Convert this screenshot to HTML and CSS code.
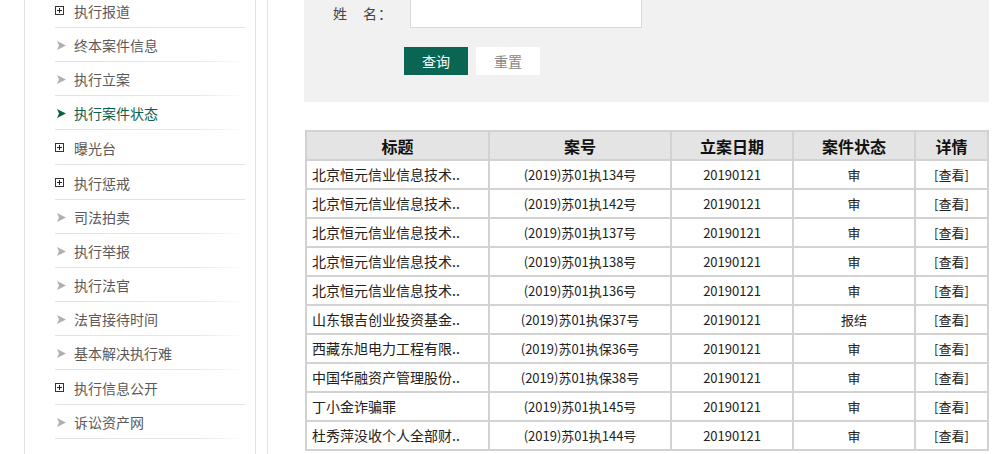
FILE: index.html
```html
<!DOCTYPE html>
<html lang="zh-CN">
<head>
    <meta charset="UTF-8">
    <title>执行案件状态</title>
    <link rel="stylesheet" href="styles.css">
</head>
<body>
    <div class="page">
        <aside class="side">
            <ul class="menu">
                <li class="menu-item has-sub"><span class="ico-plus"></span>执行报道</li>
                <li class="menu-item"><svg class="ico-arrow" viewBox="0 0 9 9"><polygon points="0,0 9,4.5 0,9 2,4.5"/></svg>终本案件信息</li>
                <li class="menu-item"><svg class="ico-arrow" viewBox="0 0 9 9"><polygon points="0,0 9,4.5 0,9 2,4.5"/></svg>执行立案</li>
                <li class="menu-item active"><svg class="ico-arrow" viewBox="0 0 9 9"><polygon points="0,0 9,4.5 0,9 2,4.5"/></svg>执行案件状态</li>
                <li class="menu-item has-sub"><span class="ico-plus"></span>曝光台</li>
                <li class="menu-item has-sub"><span class="ico-plus"></span>执行惩戒</li>
                <li class="menu-item"><svg class="ico-arrow" viewBox="0 0 9 9"><polygon points="0,0 9,4.5 0,9 2,4.5"/></svg>司法拍卖</li>
                <li class="menu-item"><svg class="ico-arrow" viewBox="0 0 9 9"><polygon points="0,0 9,4.5 0,9 2,4.5"/></svg>执行举报</li>
                <li class="menu-item"><svg class="ico-arrow" viewBox="0 0 9 9"><polygon points="0,0 9,4.5 0,9 2,4.5"/></svg>执行法官</li>
                <li class="menu-item"><svg class="ico-arrow" viewBox="0 0 9 9"><polygon points="0,0 9,4.5 0,9 2,4.5"/></svg>法官接待时间</li>
                <li class="menu-item"><svg class="ico-arrow" viewBox="0 0 9 9"><polygon points="0,0 9,4.5 0,9 2,4.5"/></svg>基本解决执行难</li>
                <li class="menu-item has-sub"><span class="ico-plus"></span>执行信息公开</li>
                <li class="menu-item"><svg class="ico-arrow" viewBox="0 0 9 9"><polygon points="0,0 9,4.5 0,9 2,4.5"/></svg>诉讼资产网</li>
            </ul>
        </aside>

        <main class="main">
            <form class="search">
                <div class="search-row">
                    <label class="search-label">姓　名：</label>
                    <input class="search-input" type="text">
                </div>
                <div class="search-btns">
                    <button type="button" class="btn btn-query">查询</button>
                    <button type="reset" class="btn btn-reset">重置</button>
                </div>
            </form>

            <table class="list">
                <colgroup>
                    <col class="col-title">
                    <col class="col-no">
                    <col class="col-date">
                    <col class="col-state">
                    <col class="col-more">
                </colgroup>
                <thead>
                    <tr><th>标题</th><th>案号</th><th>立案日期</th><th>案件状态</th><th>详情</th></tr>
                </thead>
                <tbody>
                    <tr><td class="t">北京恒元信业信息技术..</td><td>(2019)苏01执134号</td><td>20190121</td><td>审</td><td>[查看]</td></tr>
                    <tr><td class="t">北京恒元信业信息技术..</td><td>(2019)苏01执142号</td><td>20190121</td><td>审</td><td>[查看]</td></tr>
                    <tr><td class="t">北京恒元信业信息技术..</td><td>(2019)苏01执137号</td><td>20190121</td><td>审</td><td>[查看]</td></tr>
                    <tr><td class="t">北京恒元信业信息技术..</td><td>(2019)苏01执138号</td><td>20190121</td><td>审</td><td>[查看]</td></tr>
                    <tr><td class="t">北京恒元信业信息技术..</td><td>(2019)苏01执136号</td><td>20190121</td><td>审</td><td>[查看]</td></tr>
                    <tr><td class="t">山东银吉创业投资基金..</td><td>(2019)苏01执保37号</td><td>20190121</td><td>报结</td><td>[查看]</td></tr>
                    <tr><td class="t">西藏东旭电力工程有限..</td><td>(2019)苏01执保36号</td><td>20190121</td><td>审</td><td>[查看]</td></tr>
                    <tr><td class="t">中国华融资产管理股份..</td><td>(2019)苏01执保38号</td><td>20190121</td><td>审</td><td>[查看]</td></tr>
                    <tr><td class="t">丁小金诈骗罪</td><td>(2019)苏01执145号</td><td>20190121</td><td>审</td><td>[查看]</td></tr>
                    <tr><td class="t">杜秀萍没收个人全部财..</td><td>(2019)苏01执144号</td><td>20190121</td><td>审</td><td>[查看]</td></tr>
                </tbody>
            </table>
        </main>
    </div>
</body>
</html>
```

FILE: styles.css
```css
:root {
    --green: #0a6552;
    --line: #e2e2e2;
    --panel: #f1f1f1;
    --grid: #d2d2d2;
}

* {
    margin: 0;
    padding: 0;
    box-sizing: border-box;
}

html, body {
    height: 100%;
    overflow: hidden;
}

body {
    font-family: "Noto Sans CJK SC", "Liberation Sans", sans-serif;
    font-size: 14px;
    color: #333;
    background: #fff;
}

.page {
    display: flex;
    align-items: stretch;
    min-height: 100%;
    padding-left: 24px;
}

/* 左侧菜单 */
.side {
    width: 232px;
    flex: none;
    border-left: 1px solid var(--line);
    border-right: 1px solid var(--line);
    padding: 0 10px 0 30px;
}

.menu {
    list-style: none;
    margin-top: -7px;
}

.menu-item {
    display: flex;
    align-items: center;
    height: 34px;
    color: #5a5a5a;
    line-height: 1;
    background: linear-gradient(to right, #e2e2e2, #e6e6e6 75%, #fff) left bottom / 100% 1px no-repeat;
}

.menu-item.has-sub {
    height: 35px;
    background: linear-gradient(#e2e2e2, #e2e2e2) left bottom / 190px 1px no-repeat;
}

.menu-item.active {
    color: #0d5e4b;
}

.ico-arrow {
    width: 9px;
    height: 9px;
    margin: 0 8px 0 2px;
    fill: #b0b0b0;
}

.active .ico-arrow {
    fill: #0d5e4b;
}

.ico-plus {
    position: relative;
    width: 9px;
    height: 9px;
    margin-right: 10px;
    border: 1px solid #333;
}

.ico-plus::before,
.ico-plus::after {
    content: "";
    position: absolute;
    background: #222;
}

.ico-plus::before {
    left: 1px;
    top: 3px;
    width: 5px;
    height: 1px;
}

.ico-plus::after {
    left: 3px;
    top: 1px;
    width: 1px;
    height: 5px;
}

/* 右侧内容 */
.main {
    flex: 1;
    margin-left: 11px;
    border-left: 1px solid var(--line);
    padding: 0 4px 0 36px;
}

.search {
    background: var(--panel);
    margin-top: -12px;
    padding: 10px 0 27px;
}

.search-row {
    display: flex;
    align-items: center;
    height: 30px;
}

.search-label {
    width: 106px;
    padding-left: 29px;
    color: #444;
    letter-spacing: 1px;
}

.search-input {
    width: 232px;
    height: 30px;
    border: 1px solid #d9d9d9;
    background: #fff;
}

.search-btns {
    display: flex;
    gap: 8px;
    margin: 19px 0 0 100px;
}

.btn {
    width: 64px;
    height: 28px;
    border: none;
    font-family: inherit;
    font-size: 14px;
    cursor: pointer;
}

.btn-query {
    background: var(--green);
    color: #fff;
}

.btn-reset {
    background: #fff;
    color: #888;
}

/* 列表 */
.list {
    width: 682px;
    margin: 28px 0 0 1px;
    border-collapse: collapse;
    table-layout: fixed;
    color: #222;
}

.col-title { width: 183px; }
.col-no { width: 182px; }
.col-date { width: 122px; }
.col-state { width: 122px; }
.col-more { width: 73px; }

.list th,
.list td {
    height: 29px;
    border: 2px solid var(--grid);
    text-align: center;
    white-space: nowrap;
    overflow: hidden;
}

.list td {
    font-size: 13px;
    padding-bottom: 1px;
}

.list th {
    background: #e4e4e4;
    font-size: 16px;
    font-weight: bold;
    color: #111;
}

.list td.t {
    text-align: left;
    padding-left: 5px;
    font-size: 14px;
}
```
